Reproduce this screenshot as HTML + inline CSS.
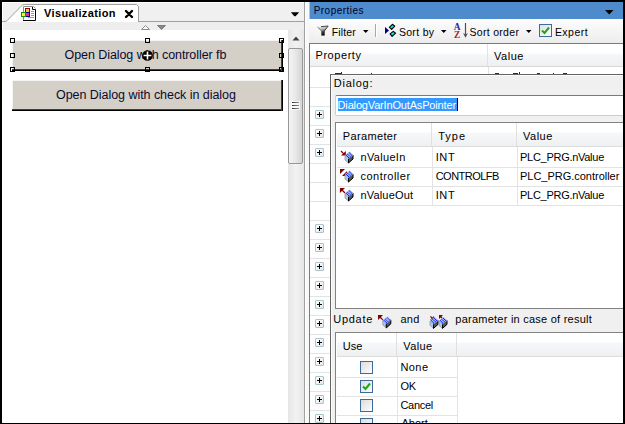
<!DOCTYPE html>
<html><head><meta charset="utf-8">
<style>
*{margin:0;padding:0;box-sizing:border-box}
html,body{width:625px;height:424px;overflow:hidden;background:#f0f0f0}
body{position:relative;font-family:"Liberation Sans",sans-serif;font-size:11px;color:#000}
.a{position:absolute}
.t{position:absolute;white-space:nowrap;line-height:1}
.h{position:absolute;width:5px;height:5px;border:1px solid #000;background:transparent}
.pb{position:absolute;width:9px;height:9px;border:1px solid #a9c4cc;border-radius:1px;background:linear-gradient(135deg,#fff,#e4e8ea)}
.pb:before{content:"";position:absolute;left:1px;top:3px;width:5px;height:1px;background:#000}
.pb:after{content:"";position:absolute;left:3px;top:1px;width:1px;height:5px;background:#000}
.hl{position:absolute;height:1px;background:#e3e3e3}
.cb{position:absolute;width:13px;height:13px;border:1px solid #3c6c9c;background:linear-gradient(135deg,#dcdcdc,#fdfdfd)}
.vl{position:absolute;width:1px;background:#e3e3e3}
</style></head><body>

<!-- ============ LEFT PANEL ============ -->
<div class="a" style="left:2px;top:2px;width:303px;height:421px;background:#f0f0f0"></div>
<div class="a" style="left:2px;top:2px;width:1px;height:421px;background:#fff"></div>
<div class="a" style="left:2px;top:2px;width:303px;height:1px;background:#fff"></div>
<!-- tab strip line -->
<div class="a" style="left:138px;top:21px;width:167px;height:1px;background:#a0a0a0"></div>
<!-- tab -->
<svg class="a" style="left:2px;top:2px" width="140" height="21">
  <path d="M0 19.5 L3 19.5 Q4 19.5 5 18.7 L19.2 4.2 Q20.5 2.5 22.5 2.5 L134.5 2.5 L136.5 4.5 L136.5 20 L0 20 Z" fill="#fff"/><path d="M0 19.5 L3 19.5 Q4 19.5 5 18.7 L19.2 4.2 Q20.5 2.5 22.5 2.5 L134.5 2.5 L136.5 4.5 L136.5 20" fill="none" stroke="#a0a0a0" stroke-width="1"/>
</svg>
<!-- icon -->
<svg class="a" style="left:21px;top:4px" width="17" height="18">
  <path d="M2.5 2.5 H12.5 L14.5 4.5 V16.5 H2.5 Z" fill="#fff"/>
  <path d="M2.5 16.5 V2.5 H12.5 L14.5 4.5" fill="none" stroke="#8c8c8c"/>
  <path d="M2 16.5 H14.5 V5.5 H11.5 V3" fill="none" stroke="#000"/>
  <path d="M10 7.5h3M10 9.5h3M10 11.5h3M7 13.5h6" stroke="#9a9a9a"/>
  <rect x="4.5" y="4.5" width="4" height="4" fill="#f8c840" stroke="#9a0010"/>
  <rect x="4.5" y="8.5" width="4" height="4" fill="#f03070" stroke="#0000a0"/>
  <rect x="0.5" y="8.5" width="4" height="4" fill="#f8f040" stroke="#00a000"/>
</svg>
<svg class="a" style="left:124px;top:9px" width="10" height="10">
  <path d="M2 2 L8 8 M8 2 L2 8" stroke="#000" stroke-width="2.4" stroke-linecap="round"/><rect x="3.5" y="3.5" width="3" height="3" fill="#000"/>
</svg>
<!-- dropdown triangle -->
<svg class="a" style="left:290px;top:12px" width="10" height="6"><path d="M0.8 0.2H9.2L5.6 4.2H4.4Z" fill="#000"/></svg>
<!-- grey strip -->
<div class="a" style="left:3px;top:22px;width:302px;height:8px;background:#eeeeee"></div>
<svg class="a" style="left:141px;top:25px" width="10" height="6"><path d="M0.5 4.5 L4.5 0.5 L8.5 4.5 Z" fill="#fafafa" stroke="#8a8a8a"/></svg>
<svg class="a" style="left:157px;top:25px" width="10" height="6"><path d="M0.5 0.5 H8.5 L4.5 4.5 Z" fill="#8a8a8a" stroke="#7a7a7a"/></svg>
<!-- canvas -->
<div class="a" style="left:3px;top:30px;width:285px;height:393px;background:#fff"></div>
<!-- button 1 -->
<div class="a" style="left:12px;top:40px;width:271px;height:31px;background:#d4d0c8;border-left:1px solid #f4f4f4;border-top:1px solid #f4f4f4"></div>
<div class="a" style="left:12px;top:69px;width:271px;height:1px;background:#404040"></div>
<div class="a" style="left:12px;top:70px;width:271px;height:1px;background:#000"></div>
<div class="a" style="left:281px;top:40px;width:1px;height:31px;background:#404040"></div>
<div class="a" style="left:282px;top:40px;width:1px;height:31px;background:#000"></div>
<!-- handles -->
<div class="h" style="left:10px;top:38px"></div>
<div class="h" style="left:145px;top:38px"></div>
<div class="h" style="left:279px;top:38px"></div>
<div class="h" style="left:10px;top:53px"></div>
<div class="h" style="left:279px;top:53px"></div>
<div class="h" style="left:10px;top:67px"></div>
<div class="h" style="left:145px;top:67px"></div>
<div class="h" style="left:279px;top:67px"></div>
<!-- move cursor -->
<svg class="a" style="left:141px;top:49px;z-index:5" width="13" height="13">
  <circle cx="6.5" cy="6.5" r="5.3" fill="#000"/>
  <path d="M6.5 2.6 V10.4 M2.6 6.5 H10.4" stroke="#fff" stroke-width="1.6"/>
</svg>
<!-- button 2 -->
<div class="a" style="left:12px;top:80px;width:271px;height:31px;background:#d4d0c8;border-left:1px solid #f4f4f4;border-top:1px solid #f4f4f4"></div>
<div class="a" style="left:12px;top:109px;width:271px;height:1px;background:#404040"></div>
<div class="a" style="left:12px;top:110px;width:271px;height:1px;background:#000"></div>
<div class="a" style="left:281px;top:80px;width:1px;height:31px;background:#404040"></div>
<div class="a" style="left:282px;top:80px;width:1px;height:31px;background:#000"></div>
<!-- scrollbar -->
<div class="a" style="left:288px;top:30px;width:16px;height:393px;background:linear-gradient(to right,#e6e6e6,#f2f2f2 50%,#e6e6e6)"></div>
<svg class="a" style="left:292px;top:36px" width="9" height="6"><path d="M0.5 4.5 L4 0.5 L7.5 4.5 Z" fill="#404040"/></svg>
<div class="a" style="left:288px;top:48px;width:15px;height:116px;border:1px solid #979797;border-radius:2px;background:linear-gradient(to right,#f4f4f4,#e8e8e8 50%,#d4d4d4)"></div>
<div class="a" style="left:291px;top:101px;width:9px;height:3px;background:rgba(255,255,255,0.7)"></div>
<div class="a" style="left:292px;top:102px;width:7px;height:1px;background:linear-gradient(to right,#303030,#707070 60%,#909090)"></div>
<div class="a" style="left:291px;top:104px;width:9px;height:3px;background:rgba(255,255,255,0.7)"></div>
<div class="a" style="left:292px;top:105px;width:7px;height:1px;background:linear-gradient(to right,#303030,#707070 60%,#909090)"></div>
<div class="a" style="left:291px;top:107px;width:9px;height:3px;background:rgba(255,255,255,0.7)"></div>
<div class="a" style="left:292px;top:108px;width:7px;height:1px;background:linear-gradient(to right,#303030,#707070 60%,#909090)"></div>
<!-- panel right border -->
<div class="a" style="left:304px;top:2px;width:1px;height:421px;background:#a0a0a0"></div>

<!-- ============ RIGHT PANEL ============ -->
<div class="a" style="left:305px;top:2px;width:1px;height:421px;background:#fff"></div>
<div class="a" style="left:306px;top:2px;width:3px;height:421px;background:#f8f8f8"></div>
<!-- title bar -->
<div class="a" style="left:309px;top:2px;width:1px;height:17px;background:#c8c4bc"></div>
<div class="a" style="left:310px;top:2px;width:313px;height:17px;background:#4d8bcd"></div>
<svg class="a" style="left:605px;top:10px" width="9" height="5"><path d="M0 0H8.5L4.25 4.5Z" fill="#000"/></svg>
<!-- toolbar -->
<div class="a" style="left:309px;top:19px;width:314px;height:24px;background:linear-gradient(#fdfdfd,#f3f3f3 60%,#ececec)"></div>
<!-- funnel -->
<div class="a" style="left:315px;top:23px;width:16px;height:15px;background:linear-gradient(#fbfbfb,#f2f2f2)"></div>
<svg class="a" style="left:312px;top:20px" width="20" height="20">
  <defs><linearGradient id="fg" x1="0" y1="0" x2="0.3" y2="1"><stop offset="0" stop-color="#fafafa"/><stop offset="0.4" stop-color="#c0c0c0"/><stop offset="0.7" stop-color="#444"/><stop offset="1" stop-color="#000"/></linearGradient></defs>
  <path d="M5.5 7 L16.2 6 L12.3 11 V15.6 H9.6 V11 Z" fill="url(#fg)"/>
  <path d="M5.5 7 L9.6 11 V15.6" fill="none" stroke="#555" stroke-width="0.8"/>
  <path d="M9 6.7 L16.2 6 L12.3 11 V15.6" fill="none" stroke="#333" stroke-width="0.9"/>
</svg>
<svg class="a" style="left:363px;top:30px" width="6" height="4"><path d="M0 0H5.5L2.75 3Z" fill="#000"/></svg>
<div class="a" style="left:375px;top:24px;width:1px;height:13px;background:#a8a8a8"></div>
<div class="a" style="left:376px;top:24px;width:1px;height:13px;background:#fff"></div>
<!-- sort by icon -->
<svg class="a" style="left:384px;top:23px" width="14" height="15">
  <path d="M1 4 L5 7.5 L1 11 Z" fill="#000080"/>
  <path d="M5.4 4.3 L8.4 1.3 L10.8 3.2 L7.7 6.4 Z" fill="#00e8e8" stroke="#000" stroke-width="1.1" stroke-linejoin="round"/>
  <path d="M6.1 10.9 L9.3 8.4 L11.6 10.2 L8.1 13.4 Z" fill="#00e8e8" stroke="#000" stroke-width="1.1" stroke-linejoin="round"/>
</svg>
<svg class="a" style="left:441px;top:30px" width="6" height="4"><path d="M0 0H5.5L2.75 3Z" fill="#000"/></svg>
<!-- AZ icon -->
<div class="t" style="left:453.8px;top:23px;font-family:'Liberation Serif',serif;font-weight:bold;font-size:9.3px;color:#2424a4">A</div>
<div class="t" style="left:454px;top:31px;font-family:'Liberation Serif',serif;font-weight:bold;font-size:9.3px;color:#a42424">Z</div>
<svg class="a" style="left:453px;top:22px" width="16" height="17">
  <path d="M12.5 1 V14" stroke="#505050" stroke-width="1.2"/>
  <path d="M10 11 L12.5 15.8 L15 11 L12.5 12.5 Z" fill="#505050"/>
</svg>
<svg class="a" style="left:526px;top:30px" width="6" height="4"><path d="M0 0H5.5L2.75 3Z" fill="#000"/></svg>
<!-- expert checkbox -->
<div class="a" style="left:539px;top:24px;width:13px;height:13px;border:1px solid #3c6c9c;background:linear-gradient(135deg,#e0e0e0,#fdfdfd)"></div>
<svg class="a" style="left:541px;top:26px" width="9" height="9"><path d="M1 4.5 L3.5 7 L8 1.5" fill="none" stroke="#1ea51e" stroke-width="2"/></svg>

<!-- property grid -->
<div class="a" style="left:309px;top:43px;width:314px;height:380px;background:#fff;border-left:1px solid #7b7b7b;border-top:1px solid #7b7b7b"></div>
<div class="a" style="left:310px;top:44px;width:313px;height:22px;background:linear-gradient(#fff 0,#fff 40%,#f5f6f8 50%,#eff0f2 100%)"></div>
<div class="a" style="left:310px;top:66px;width:313px;height:1px;background:#d8d8d8"></div>
<div class="a" style="left:487px;top:44px;width:1px;height:22px;background:#e2e2e2"></div>
<div class="a" style="left:488px;top:67px;width:1px;height:20px;background:#e2e2e2"></div>
<div class="hl" style="left:310px;top:87px;width:313px"></div>
<div class="hl" style="left:310px;top:106px;width:313px"></div>
<div class="hl" style="left:310px;top:125px;width:313px"></div>
<div class="hl" style="left:310px;top:144px;width:313px"></div>
<div class="hl" style="left:310px;top:163px;width:313px"></div>
<div class="hl" style="left:310px;top:182px;width:313px"></div>
<div class="hl" style="left:310px;top:201px;width:313px"></div>
<div class="hl" style="left:310px;top:220px;width:313px"></div>
<div class="hl" style="left:310px;top:239px;width:313px"></div>
<div class="hl" style="left:310px;top:258px;width:313px"></div>
<div class="hl" style="left:310px;top:277px;width:313px"></div>
<div class="hl" style="left:310px;top:296px;width:313px"></div>
<div class="hl" style="left:310px;top:315px;width:313px"></div>
<div class="hl" style="left:310px;top:334px;width:313px"></div>
<div class="hl" style="left:310px;top:353px;width:313px"></div>
<div class="hl" style="left:310px;top:372px;width:313px"></div>
<div class="hl" style="left:310px;top:391px;width:313px"></div>
<div class="hl" style="left:310px;top:410px;width:313px"></div>
<div class="pb" style="left:315px;top:110px"></div>
<div class="pb" style="left:315px;top:129px"></div>
<div class="pb" style="left:315px;top:148px"></div>
<div class="pb" style="left:315px;top:224px"></div>
<div class="pb" style="left:315px;top:243px"></div>
<div class="pb" style="left:315px;top:262px"></div>
<div class="pb" style="left:315px;top:281px"></div>
<div class="pb" style="left:315px;top:300px"></div>
<div class="pb" style="left:315px;top:319px"></div>
<div class="pb" style="left:315px;top:338px"></div>
<div class="pb" style="left:315px;top:357px"></div>
<div class="pb" style="left:315px;top:376px"></div>
<div class="pb" style="left:315px;top:395px"></div>
<div class="pb" style="left:315px;top:414px"></div>


<!-- hidden row text tops -->
<div class="a" style="left:335px;top:73px;width:6px;height:1px;background:#2a2a3a"></div>
<div class="a" style="left:341px;top:72px;width:1px;height:2px;background:#2a2a3a"></div>
<div class="a" style="left:371px;top:73px;width:1px;height:1px;background:#2a2a3a"></div>
<div class="a" style="left:495px;top:73px;width:4px;height:1px;background:#2a2a3a"></div>
<div class="a" style="left:513px;top:73px;width:5px;height:1px;background:#2a2a3a"></div>
<div class="a" style="left:519px;top:72px;width:1px;height:2px;background:#2a2a3a"></div>
<div class="a" style="left:537px;top:73px;width:3px;height:1px;background:#2a2a3a"></div>
<div class="a" style="left:553px;top:73px;width:1px;height:1px;background:#2a2a3a"></div>
<div class="a" style="left:563px;top:73px;width:4px;height:1px;background:#2a2a3a"></div>
<!-- popup -->
<div class="a" style="left:330px;top:74px;width:293px;height:349px;background:#f0f0f0;border-left:1px solid #646464;border-top:1px solid #646464"></div>
<div class="a" style="left:331px;top:75px;width:292px;height:1px;background:#fcfcfc"></div>
<div class="a" style="left:331px;top:75px;width:1px;height:348px;background:#fcfcfc"></div>
<!-- text field -->
<div class="a" style="left:335px;top:95px;width:300px;height:21px;background:#fff;border:1px solid #b7d3ea;border-top-color:#4a86b8;border-radius:2px"></div>
<div class="a" style="left:338px;top:98px;width:120px;height:13px;background:#3399ff"></div>
<div class="a" style="left:457px;top:98px;width:1px;height:13px;background:#000"></div>

<!-- parameter table -->
<div class="a" style="left:335px;top:122px;width:300px;height:187px;background:#fff;border:1px solid #828282"></div>
<div class="a" style="left:337px;top:123px;width:286px;height:23px;background:linear-gradient(#fff 0,#fff 38%,#f6f7f8 45%,#eef0f2 100%)"></div>
<div class="a" style="left:337px;top:146px;width:286px;height:1px;background:#dcdcdc"></div>
<div class="a" style="left:431px;top:123px;width:1px;height:23px;background:#e0e0e0"></div>
<div class="a" style="left:516px;top:123px;width:1px;height:23px;background:#e0e0e0"></div>
<div class="vl" style="left:432px;top:147px;height:58px"></div>
<div class="vl" style="left:517px;top:147px;height:58px"></div>
<div class="hl" style="left:337px;top:167px;width:286px"></div>
<div class="hl" style="left:337px;top:186px;width:286px"></div>
<div class="hl" style="left:337px;top:205px;width:286px"></div>
<!--PARAMICONS-->

<!-- param row 1: in -->
<svg class="a" style="left:338px;top:148px" width="17" height="17">
  <path d="M3 7.6 H7.9 V3 Z" fill="#800000"/>
  <path d="M3 3 L5.8 5.8" stroke="#800000" stroke-width="1.2"/>
  <g transform="translate(7,4)"><path d="M0 3.5 L3.5 6.5 L3.5 11 L0 8 Z" fill="#a9cdf0" stroke="#8a8a8a" stroke-width="0.7"/>
      <path d="M8 3 L8 7 L3.5 11 L3.5 6.5 Z" fill="#555" stroke="#000" stroke-width="1"/>
      <path d="M4.5 0 L8 3 L3.5 6.5 L0 3.5 Z" fill="#0010ff" stroke="#b0c8d8" stroke-width="0.8"/>
      <path d="M1.17 4.5 L5.67 1 M2.33 5.5 L6.83 2 M1.5 2.33 L5 5.33 M3 1.17 L6.5 4.17" stroke="#c8e0ff" stroke-width="0.75"/></g>
</svg>
<!-- param row 2: inout -->
<svg class="a" style="left:338px;top:167px" width="17" height="17">
  <path d="M2 2 H7 L2 7 Z" fill="#800000"/>
  <path d="M4 9 H9 V4 Z" fill="#800000"/>
  <g transform="translate(7,4)"><path d="M0 3.5 L3.5 6.5 L3.5 11 L0 8 Z" fill="#a9cdf0" stroke="#8a8a8a" stroke-width="0.7"/>
      <path d="M8 3 L8 7 L3.5 11 L3.5 6.5 Z" fill="#555" stroke="#000" stroke-width="1"/>
      <path d="M4.5 0 L8 3 L3.5 6.5 L0 3.5 Z" fill="#0010ff" stroke="#b0c8d8" stroke-width="0.8"/>
      <path d="M1.17 4.5 L5.67 1 M2.33 5.5 L6.83 2 M1.5 2.33 L5 5.33 M3 1.17 L6.5 4.17" stroke="#c8e0ff" stroke-width="0.75"/></g>
</svg>
<!-- param row 3: out -->
<svg class="a" style="left:338px;top:186px" width="17" height="17">
  <path d="M1.9 1.9 H7 L1.9 7 Z" fill="#800000"/>
  <path d="M4 4 L7 7" stroke="#800000" stroke-width="1.2"/>
  <g transform="translate(7,4)"><path d="M0 3.5 L3.5 6.5 L3.5 11 L0 8 Z" fill="#a9cdf0" stroke="#8a8a8a" stroke-width="0.7"/>
      <path d="M8 3 L8 7 L3.5 11 L3.5 6.5 Z" fill="#555" stroke="#000" stroke-width="1"/>
      <path d="M4.5 0 L8 3 L3.5 6.5 L0 3.5 Z" fill="#0010ff" stroke="#b0c8d8" stroke-width="0.8"/>
      <path d="M1.17 4.5 L5.67 1 M2.33 5.5 L6.83 2 M1.5 2.33 L5 5.33 M3 1.17 L6.5 4.17" stroke="#c8e0ff" stroke-width="0.75"/></g>
</svg>
<!-- update icon out -->
<svg class="a" style="left:376px;top:313px" width="17" height="17">
  <path d="M2 2 H7 L2 7 Z" fill="#800000"/>
  <path d="M4 4 L6.8 6.8" stroke="#800000" stroke-width="1.2"/>
  <g transform="translate(6.8,3.9)"><path d="M0 3.5 L3.5 6.5 L3.5 11 L0 8 Z" fill="#a9cdf0" stroke="#8a8a8a" stroke-width="0.7"/>
      <path d="M8 3 L8 7 L3.5 11 L3.5 6.5 Z" fill="#555" stroke="#000" stroke-width="1"/>
      <path d="M4.5 0 L8 3 L3.5 6.5 L0 3.5 Z" fill="#0010ff" stroke="#b0c8d8" stroke-width="0.8"/>
      <path d="M1.17 4.5 L5.67 1 M2.33 5.5 L6.83 2 M1.5 2.33 L5 5.33 M3 1.17 L6.5 4.17" stroke="#c8e0ff" stroke-width="0.75"/></g>
</svg>
<!-- update icon double -->
<svg class="a" style="left:429px;top:314px" width="19" height="15">
  <path d="M1 5.7 H5 V2.1 Z" fill="#800000"/>
  <path d="M1.4 2.3 L3.6 4.5" stroke="#800000" stroke-width="1.1"/>
  <g transform="translate(1,3.4)"><path d="M0 3.5 L3.5 6.5 L3.5 11 L0 8 Z" fill="#a9cdf0" stroke="#8a8a8a" stroke-width="0.7"/>
      <path d="M8 3 L8 7 L3.5 11 L3.5 6.5 Z" fill="#555" stroke="#000" stroke-width="1"/>
      <path d="M4.5 0 L8 3 L3.5 6.5 L0 3.5 Z" fill="#0010ff" stroke="#b0c8d8" stroke-width="0.8"/>
      <path d="M1.17 4.5 L5.67 1 M2.33 5.5 L6.83 2 M1.5 2.33 L5 5.33 M3 1.17 L6.5 4.17" stroke="#c8e0ff" stroke-width="0.75"/></g>
  <path d="M10 1 H14 L10 5 Z" fill="#800000"/>
  <path d="M11.5 2.5 L13.3 4.3" stroke="#800000" stroke-width="1.1"/>
  <g transform="translate(10,3.4)"><path d="M0 3.5 L3.5 6.5 L3.5 11 L0 8 Z" fill="#a9cdf0" stroke="#8a8a8a" stroke-width="0.7"/>
      <path d="M8 3 L8 7 L3.5 11 L3.5 6.5 Z" fill="#555" stroke="#000" stroke-width="1"/>
      <path d="M4.5 0 L8 3 L3.5 6.5 L0 3.5 Z" fill="#0010ff" stroke="#b0c8d8" stroke-width="0.8"/>
      <path d="M1.17 4.5 L5.67 1 M2.33 5.5 L6.83 2 M1.5 2.33 L5 5.33 M3 1.17 L6.5 4.17" stroke="#c8e0ff" stroke-width="0.75"/></g>
</svg>


<!-- use table -->
<div class="a" style="left:335px;top:332px;width:300px;height:100px;background:#fff;border:1px solid #828282"></div>
<div class="a" style="left:337px;top:333px;width:286px;height:23px;background:linear-gradient(#fff 0,#fff 38%,#f6f7f8 45%,#eef0f2 100%)"></div>
<div class="a" style="left:337px;top:356px;width:286px;height:1px;background:#dcdcdc"></div>
<div class="a" style="left:396px;top:333px;width:1px;height:23px;background:#e0e0e0"></div>
<div class="a" style="left:456px;top:333px;width:1px;height:23px;background:#e0e0e0"></div>
<div class="vl" style="left:397px;top:357px;height:66px"></div>
<div class="vl" style="left:457px;top:357px;height:66px"></div>
<div class="hl" style="left:337px;top:377px;width:121px"></div>
<div class="hl" style="left:337px;top:396px;width:121px"></div>
<div class="hl" style="left:337px;top:415px;width:121px"></div>
<div class="cb" style="left:360px;top:361px"></div>
<div class="cb" style="left:360px;top:380px"></div>
<svg class="a" style="left:362px;top:382px" width="9" height="9"><path d="M1 4.5 L3.5 7 L8 1.5" fill="none" stroke="#1ea51e" stroke-width="2"/></svg>
<div class="cb" style="left:360px;top:399px"></div>
<div class="cb" style="left:360px;top:418px"></div>

<div class="t" style="left:44.00px;top:8px;font-size:11px;color:#000;font-weight:bold;letter-spacing:0.367px">Visualization</div>
<div class="t" style="left:64.60px;top:49px;font-size:12.5px;color:#0a0a30;letter-spacing:-0.076px">Open Dialog with controller fb</div>
<div class="t" style="left:56.00px;top:89px;font-size:12.5px;color:#0a0a30;letter-spacing:-0.045px">Open Dialog with check in dialog</div>
<div class="t" style="left:313.70px;top:6px;font-size:10px;color:#000028;letter-spacing:0.467px">Properties</div>
<div class="t" style="left:331.80px;top:27px;font-size:10.5px;color:#000;letter-spacing:0.140px">Filter</div>
<div class="t" style="left:398.90px;top:27px;font-size:10.5px;color:#000;letter-spacing:0.317px">Sort by</div>
<div class="t" style="left:469.50px;top:27px;font-size:10.5px;color:#000;letter-spacing:0.300px">Sort order</div>
<div class="t" style="left:554.90px;top:27px;font-size:10.5px;color:#000;letter-spacing:0.480px">Expert</div>
<div class="t" style="left:315.50px;top:50px;font-size:11px;color:#000;letter-spacing:0.557px">Property</div>
<div class="t" style="left:494.10px;top:51px;font-size:11px;color:#000;letter-spacing:0.500px">Value</div>
<div class="t" style="left:333.80px;top:78px;font-size:11px;color:#000;letter-spacing:0.733px">Dialog:</div>
<div class="t" style="left:337.60px;top:100px;font-size:11px;color:#fff;letter-spacing:-0.164px">DialogVarInOutAsPointer</div>
<div class="t" style="left:342.80px;top:131px;font-size:11px;color:#000;letter-spacing:0.350px">Parameter</div>
<div class="t" style="left:438.20px;top:131px;font-size:11px;color:#000;letter-spacing:1.000px">Type</div>
<div class="t" style="left:523.10px;top:131px;font-size:11px;color:#000;letter-spacing:0.475px">Value</div>
<div class="t" style="left:360.50px;top:152px;font-size:11px;color:#000;letter-spacing:0.314px">nValueIn</div>
<div class="t" style="left:360.50px;top:171px;font-size:11px;color:#000;letter-spacing:0.478px">controller</div>
<div class="t" style="left:360.50px;top:190px;font-size:11px;color:#000;letter-spacing:0.163px">nValueOut</div>
<div class="t" style="left:435.70px;top:152px;font-size:11px;color:#000;letter-spacing:0.600px">INT</div>
<div class="t" style="left:435.70px;top:171px;font-size:11px;color:#000;letter-spacing:-0.525px">CONTROLFB</div>
<div class="t" style="left:435.70px;top:190px;font-size:11px;color:#000;letter-spacing:0.600px">INT</div>
<div class="t" style="left:520.00px;top:152px;font-size:11px;color:#000;letter-spacing:-0.277px">PLC_PRG.nValue</div>
<div class="t" style="left:520.00px;top:171px;font-size:11px;color:#000;letter-spacing:-0.018px">PLC_PRG.controller</div>
<div class="t" style="left:520.00px;top:190px;font-size:11px;color:#000;letter-spacing:-0.277px">PLC_PRG.nValue</div>
<div class="t" style="left:333.30px;top:314px;font-size:11px;color:#000;letter-spacing:0.700px">Update</div>
<div class="t" style="left:400.60px;top:314px;font-size:11px;color:#000;letter-spacing:0.150px">and</div>
<div class="t" style="left:455.30px;top:314px;font-size:11px;color:#000;letter-spacing:0.242px">parameter in case of result</div>
<div class="t" style="left:342.70px;top:341px;font-size:11px;color:#000;letter-spacing:0.100px">Use</div>
<div class="t" style="left:403.30px;top:341px;font-size:11px;color:#000;letter-spacing:0.350px">Value</div>
<div class="t" style="left:400.50px;top:362px;font-size:11px;color:#000;letter-spacing:0.400px">None</div>
<div class="t" style="left:400.50px;top:381px;font-size:11px;color:#000;letter-spacing:-0.400px">OK</div>
<div class="t" style="left:400.50px;top:400px;font-size:11px;color:#000;letter-spacing:-0.320px">Cancel</div>
<div class="t" style="left:401.50px;top:418px;font-size:11px;color:#000">Abort</div>

<!-- ============ BLACK FRAME ============ -->
<div class="a" style="left:0;top:0;width:625px;height:2px;background:#000"></div>
<div class="a" style="left:0;top:0;width:2px;height:424px;background:#000"></div>
<div class="a" style="left:623px;top:0;width:2px;height:424px;background:#000"></div>
<div class="a" style="left:0;top:423px;width:625px;height:1px;background:#000"></div>
</body></html>
